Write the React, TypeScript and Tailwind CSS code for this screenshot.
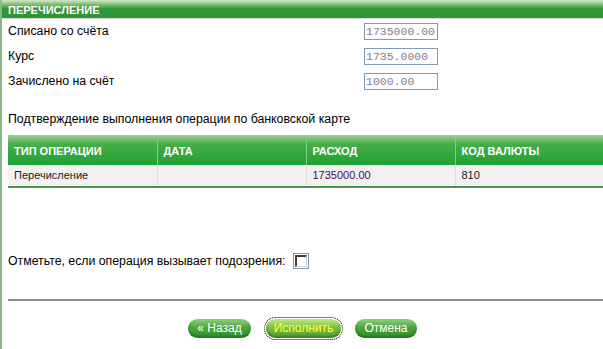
import React from 'react';

const btn =
  'h-[19px] rounded-full text-[12px] leading-[19px] whitespace-nowrap text-center shadow-[inset_0_-2px_3px_rgba(0,60,0,0.35)]';
const green = 'bg-[linear-gradient(to_bottom,#8fd07f_0%,#4aa83e_45%,#2f8f2a_100%)] text-white';

function Field({ label, value }: { label: string; value: string }) {
  return (
    <div className="flex items-center h-[25px]">
      <div className="w-[356px] text-[12.3px] text-black">{label}</div>
      <div className="w-[74px] h-[17px] border border-[#7f9db9] bg-white px-[1px] text-[11.5px] leading-[15px] text-[#8a7a8f] font-['Liberation_Mono',monospace] overflow-hidden whitespace-nowrap">
        {value}
      </div>
    </div>
  );
}

export default function App() {
  return (
    <div className="w-[603px] h-[349px] bg-white font-['Liberation_Sans',Arial,sans-serif] border-l-2 border-[#86b886] overflow-hidden">
      <div className="h-[18px] bg-[linear-gradient(to_bottom,#d4e8c8_0%,#7cbf6f_25%,#2e9637_50%,#2e9637_100%)] pl-[6px] text-[11px] font-bold text-white leading-[21px]">
        ПЕРЕЧИСЛЕНИЕ
      </div>
      <div className="h-[1px] bg-[#dcdcdc]" />

      <div className="pl-[6px]">
        <div>
          <Field label="Списано со счёта" value="1735000.00" />
          <Field label="Курс" value="1735.0000" />
          <Field label="Зачислено на счёт" value="1000.00" />
        </div>

        <div className="mt-[18px] text-[12.3px] leading-[15px] text-black">Подтверждение выполнения операции по банковской карте</div>

        <table className="mt-[8px] w-full border-collapse">
          <thead>
            <tr className="h-[30px] bg-[linear-gradient(to_bottom,#9fd29a_0%,#46ad48_30%,#1fa232_100%)] text-white font-bold text-left text-[11px]">
              <th className="w-[149px] pl-[6px] pt-[3px] border-r border-[#7fcf87]">ТИП ОПЕРАЦИИ</th>
              <th className="w-[149px] pl-[6px] pt-[3px] border-r border-[#7fcf87]">ДАТА</th>
              <th className="w-[149px] pl-[6px] pt-[3px] border-r border-[#7fcf87]">РАСХОД</th>
              <th className="pl-[6px] pt-[3px]">КОД ВАЛЮТЫ</th>
            </tr>
          </thead>
          <tbody>
            <tr className="h-[22px] bg-[#f2f2f2] border-b-2 border-[#4f8f4f] text-[#1a1a1a] text-[11px]">
              <td className="pl-[6px] border-r border-[#dcdcdc]">Перечисление</td>
              <td className="pl-[6px] border-r border-[#dcdcdc]"></td>
              <td className="pl-[6px] border-r border-[#dcdcdc] text-[#4b0a4b]">1735000.00</td>
              <td className="pl-[6px]">810</td>
            </tr>
          </tbody>
        </table>

        <div className="mt-[65px] h-[16px] flex items-center text-[12.3px] text-black">
          <span>Отметьте, если операция вызывает подозрения:</span>
          <span className="ml-[7px] w-[16px] h-[16px] border border-[#7f9db9] bg-white flex items-center justify-center">
            <span className="w-[12px] h-[12px] border-t-2 border-l-2 border-[#404040] border-r border-b border-r-[#d4d0c8] border-b-[#d4d0c8]" />
          </span>
        </div>

        <div className="mt-[30px] h-[2px] bg-[#8c8c8c]" />

        <div className="mt-[18px] flex justify-center pr-[6px]">
          <div className={`${btn} ${green} w-[63px]`}>« Назад</div>
          <div className={`${btn} ml-[15px] w-[75px] text-[#ffff33] bg-[linear-gradient(to_bottom,#c6e87f_0%,#7cc048_45%,#4f9d30_100%)] outline-1 outline-dotted outline-black outline-offset-[1px]`}>
            Исполнить
          </div>
          <div className={`${btn} ${green} ml-[14px] w-[62px]`}>Отмена</div>
        </div>
      </div>
    </div>
  );
}
